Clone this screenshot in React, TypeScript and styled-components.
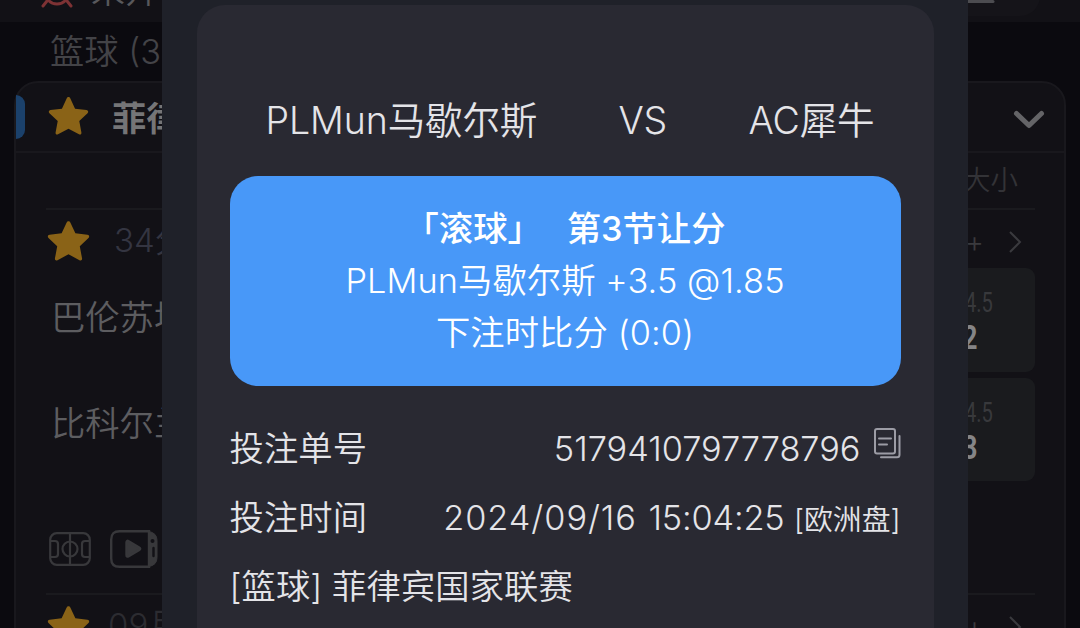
import React from "react";
import styled, { createGlobalStyle } from "styled-components";

const GlobalStyle = createGlobalStyle`
  * {
    box-sizing: border-box;
  }

  body {
    margin: 0;
    background: #0b0a0f;
    font-family: Inter, "Noto Sans CJK SC", sans-serif;
    font-weight: 350;
  }
`;

const STAR =
  "M20 1.5c.8 0 1.3.5 1.7 1.2l4.7 10.1 11.2 1.4c1.6.2 2.2 1.9 1 3l-8.1 7.7 2.1 11.2c.3 1.6-1 2.5-2.4 1.7L20 32.4l-10.2 5.4c-1.4.8-2.7-.1-2.4-1.7l2.1-11.2-8.1-7.7c-1.2-1.1-.6-2.8 1-3l11.2-1.4 4.7-10.1c.4-.7.9-1.2 1.7-1.2z";

const Star: React.FC<{ size: number }> = ({ size }) => (
  <StarIcon width={size} height={size} viewBox="0 0 40 39">
    <path d={STAR} />
  </StarIcon>
);

const AlarmIcon = () => (
  <svg width="32" height="32" viewBox="0 0 32 32" fill="none" stroke="#7d3234" strokeWidth="3">
    <circle cx="16" cy="16" r="12" />
    <path d="M6 25l-4 5M26 25l4 5" strokeLinecap="round" />
  </svg>
);

const CourtIcon = () => (
  <svg width="42" height="34" viewBox="0 0 42 34" fill="none" stroke="#38383b" strokeWidth="2.2">
    <rect x="1.2" y="1.2" width="39.6" height="31.6" rx="6.5" />
    <circle cx="21" cy="17" r="7.5" />
    <path d="M21 1v32M1 9h5q3 0 3 3v10q0 3-3 3H1M41 9h-5q-3 0-3 3v10q0 3 3 3h5" />
  </svg>
);

const VideoIcon = () => (
  <svg width="48" height="38" viewBox="0 0 48 38" fill="none" stroke="#38383b" strokeWidth="2.4">
    <path d="M39 1.2H9.500q-8.300 0-8.300 8.300v19q0 8.300 8.300 8.300H39z" />
    <path d="M39 1.500q8 1.500 8 9v17q0 7.500-8 9z" fill="#38383b" strokeWidth="1" />
    <path d="M16.500 12.500q0-2.500 2.200-1.300l10.500 6.300q2 1.200 0 2.400l-10.500 6.300q-2.200 1.300-2.200-1.200z" fill="#38383b" />
    <circle cx="42.500" cy="11" r="2" fill="#121116" stroke="none" />
    <path d="M43.500 18v8" stroke="#121116" strokeLinecap="round" />
  </svg>
);

const CopyIcon = () => (
  <CopySvg width="27" height="31" viewBox="0 0 27 31">
    <rect x="1" y="1" width="20" height="24.500" rx="2" />
    <path d="M5 10.500h12M5 16.500h8M7 29.300h16q2.500 0 2.500-2.500V8" />
  </CopySvg>
);

const Arrow = () => (
  <svg width="14" height="24" viewBox="0 0 14 24" fill="none" stroke="#3a3a3e" strokeWidth="2">
    <path d="M2 2l10 10L2 22" />
  </svg>
);

interface OddsProps {
  line: string;
  value: string;
}

const Odds: React.FC<OddsProps> = ({ line, value }) => (
  <OddsBox>
    <OddsLine>{line}</OddsLine>
    <OddsValue>{value}</OddsValue>
  </OddsBox>
);

const MatchList = () => (
  <Page>
    <TopBar>
      <AlarmIcon />
      <TopTitle>未开</TopTitle>
      <TopPill>
        <svg width="30" height="6" viewBox="0 0 30 6">
          <path d="M2 1.500h25" stroke="#4c4c50" strokeWidth="3" strokeLinecap="round" />
        </svg>
      </TopPill>
    </TopBar>
    <SportTitle>篮球 (3</SportTitle>
    <LeagueCard>
      <LeagueHeader>
        <Marker />
        <Star size={41} />
        <LeagueName>菲律</LeagueName>
        <Chevron width="32" height="20" viewBox="0 0 32 20">
          <path d="M3.500 3.500l12.500 12 12.500-12" />
        </Chevron>
      </LeagueHeader>
      <MarketHeader>大小</MarketHeader>
      <Match>
        <MatchTop>
          <Star size={43} />
          <MatchTime>34分</MatchTime>
          <More>+</More>
          <Arrow />
        </MatchTop>
        <MatchBody>
          <Teams>
            <span>巴伦苏埃</span>
            <span>比科尔兰</span>
          </Teams>
          <OddsColumn>
            <Odds line="4.5" value="2" />
            <Odds line="4.5" value="3" />
          </OddsColumn>
        </MatchBody>
        <MatchIcons>
          <CourtIcon />
          <VideoIcon />
        </MatchIcons>
      </Match>
      <Match>
        <MatchTop>
          <Star size={43} />
          <MatchTime $upcoming>09月</MatchTime>
          <More>+</More>
          <Arrow />
        </MatchTop>
      </Match>
    </LeagueCard>
  </Page>
);

export default function App() {
  return (
    <>
      <GlobalStyle />
      <MatchList />
      <Sheet>
        <Ticket>
          <Versus>
            <Team>PLMun马歇尔斯</Team>
            <Team>VS</Team>
            <Team>AC犀牛</Team>
          </Versus>
          <BetBox>
            <BetTitle>
              <span>「滚球」</span>
              <span>第3节让分</span>
            </BetTitle>
            <BetLine>PLMun马歇尔斯 +3.5 @1.85</BetLine>
            <BetLine>下注时比分 (0:0)</BetLine>
          </BetBox>
          <Row>
            <span>投注单号</span>
            <OrderNumber>
              5179410797778796
              <CopyIcon />
            </OrderNumber>
          </Row>
          <Row>
            <span>投注时间</span>
            <BetTime>
              <BetDate>2024/09/16</BetDate> 15:04:25 <small>[欧洲盘]</small>
            </BetTime>
          </Row>
          <Row>
            <span>[篮球] 菲律宾国家联赛</span>
          </Row>
        </Ticket>
      </Sheet>
    </>
  );
}

const Page = styled.div`
  width: 1080px;
  height: 628px;
  overflow: hidden;
  background: #0b0a0f;
`;

const TopBar = styled.div`
  display: flex;
  align-items: flex-end;
  height: 22px;
  padding: 0 40px 14px 41px;
  background: #121116;
  overflow: hidden;
`;

const TopTitle = styled.div`
  margin: 0 0 -4px 18px;
  font-size: 34px;
  line-height: 42px;
  color: #58585b;
`;

const TopPill = styled.div`
  width: 120px;
  height: 40px;
  margin: 0 0 -8px auto;
  padding: 14px 0 0 46px;
  border-radius: 20px;
  background: #151419;
`;

const SportTitle = styled.div`
  height: 59px;
  padding-left: 50px;
  font-size: 34.3px;
  line-height: 60px;
  color: #434347;
`;

const LeagueCard = styled.div`
  height: 600px;
  margin: 0 14px;
  border: 2px solid #19181d;
  border-radius: 24px;
  background: #121116;
`;

const LeagueHeader = styled.div`
  display: flex;
  align-items: center;
  height: 70px;
  padding-right: 19px;
  border-bottom: 2px solid #19181d;
`;

const Marker = styled.div`
  width: 9px;
  height: 44px;
  margin-right: 23px;
  border-radius: 0 9px 9px 0;
  background: #1b416b;
`;

const StarIcon = styled.svg`
  flex-shrink: 0;
  margin-top: -3px;
  fill: #8a6317;
`;

const LeagueName = styled.div`
  margin: -3px 0 0 23px;
  font-size: 34.3px;
  font-weight: 700;
  color: #757577;
`;

const Chevron = styled.svg`
  margin: 5px 0 0 auto;
  fill: none;
  stroke: #646467;
  stroke-width: 5;
  stroke-linecap: round;
  stroke-linejoin: round;
`;

const MarketHeader = styled.div`
  height: 55px;
  padding-right: 46px;
  font-size: 27.5px;
  line-height: 55px;
  text-align: right;
  color: #333337;
`;

const Match = styled.div`
  height: 385px;
  margin: 0 29px 0 30px;
  border-top: 2px solid #1a1a1e;
`;

const MatchTop = styled.div`
  display: flex;
  align-items: center;
  height: 58px;
  padding: 6px 13px 0 1px;
`;

const MatchTime = styled.div<{ $upcoming?: boolean }>`
  margin: -8px 0 0 ${(p) => (p.$upcoming ? 18 : 24)}px;
  font-size: 33px;
  color: ${(p) => (p.$upcoming ? "#2c2c31" : "#343541")};
`;

const More = styled.div`
  margin: -2px 24px 0 auto;
  font-size: 29px;
  color: #3a3a3e;
`;

const MatchBody = styled.div`
  display: flex;
  justify-content: space-between;
`;

const Teams = styled.div`
  display: flex;
  flex-direction: column;
  gap: 56px;
  padding: 25px 0 0 5px;
  font-size: 34.3px;
  line-height: 50px;
  color: #5d5d60;
`;

const OddsColumn = styled.div`
  display: flex;
  flex-direction: column;
  gap: 6px;
  padding-bottom: 1px;
`;

const OddsBox = styled.div`
  display: flex;
  flex-direction: column;
  align-items: flex-end;
  width: 170px;
  height: 103.5px;
  padding-top: 20px;
  border-radius: 9px;
  background: #1a1b1e;
  font-family: Roboto, sans-serif;
`;

const OddsLine = styled.div`
  margin-right: 42px;
  font-size: 28px;
  font-weight: 400;
  line-height: 30px;
  color: #38393c;
  transform: scaleX(0.72);
  transform-origin: right;
`;

const OddsValue = styled.div`
  margin-right: 57px;
  font-size: 34px;
  font-weight: 700;
  line-height: 38px;
  color: #858587;
  transform: scaleX(0.78);
  transform-origin: right;
`;

const MatchIcons = styled.div`
  display: flex;
  align-items: center;
  gap: 19px;
  padding: 48px 0 0 3px;
`;

// covers the list while a ticket is open
const Sheet = styled.div`
  position: absolute;
  top: 0;
  left: 162px;
  width: 806px;
  height: 628px;
  padding: 5px 34px 0 35px;
  overflow: hidden;
  background: #1f2129;
`;

const Ticket = styled.div`
  height: 700px;
  padding: 77px 33.5px 0 32.5px;
  border-radius: 28px;
  background: #292932;
  color: #e4e4e8;
`;

const Versus = styled.div`
  display: flex;
  justify-content: space-between;
  height: 94px;
  padding: 0 26px 0 36px;
`;

const Team = styled.div`
  font-size: 37.5px;
  line-height: 78px;
  letter-spacing: -0.1px;
`;

const BetBox = styled.div`
  height: 210px;
  margin-bottom: 28px;
  padding-top: 27px;
  border-radius: 28px;
  background: #4898f8;
  color: #fff;
  font-size: 34.3px;
  line-height: 52px;
  text-align: center;
`;

const BetTitle = styled.div`
  display: flex;
  justify-content: center;
  gap: 25px;
  font-weight: 500;
`;

const BetLine = styled.div`
  height: 52px;
  letter-spacing: 0.1px;
  white-space: nowrap;
`;

const Row = styled.div`
  display: flex;
  justify-content: space-between;
  height: 69px;
  font-size: 34.3px;
  line-height: 69px;
  letter-spacing: 0.1px;
  white-space: nowrap;
`;

const OrderNumber = styled.div`
  display: flex;
  letter-spacing: 0;
`;

const CopySvg = styled.svg`
  margin: 14px 0 0 13px;
  fill: none;
  stroke: #9c9ca5;
  stroke-width: 2;
  stroke-linecap: round;
`;

const BetTime = styled.div`
  letter-spacing: -0.15px;

  small {
    font-size: 28.8px;
    letter-spacing: 0;
  }
`;

const BetDate = styled.span`
  margin-right: 2px;
  letter-spacing: 0.95px;
`;
